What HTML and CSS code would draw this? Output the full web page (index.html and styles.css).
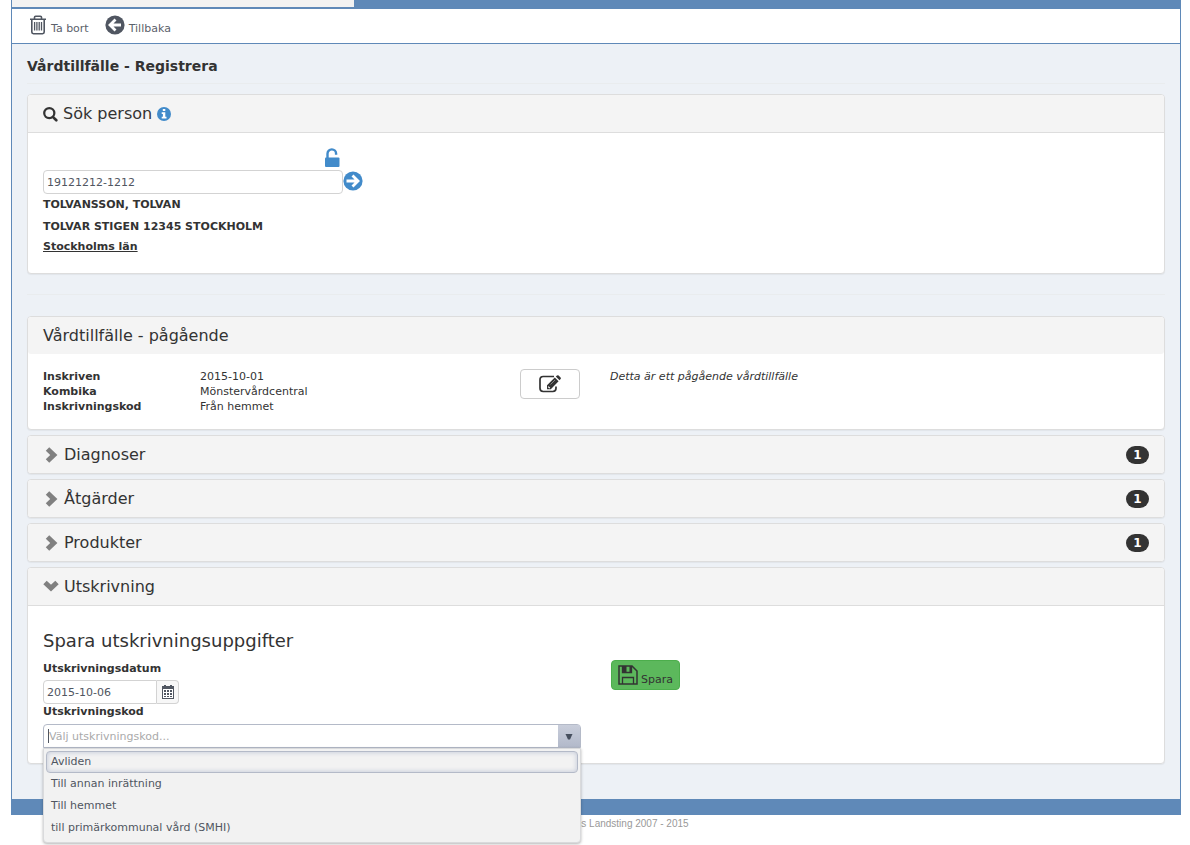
FILE: index.html
```html
<!DOCTYPE html>
<html lang="sv">
<head>
<meta charset="utf-8">
<meta name="viewport" content="width=device-width, initial-scale=1">
<title>Vårdtillfälle - Registrera</title>
<link rel="stylesheet" href="styles.css">
</head>
<body>
<div class="shell">
  <div class="tabstrip"><div class="tab-area"></div></div>
  <nav class="toolbar" aria-label="Verktyg">
    <button type="button" class="tool">
      <svg width="18" height="20" viewBox="0 0 18 20" fill="none" stroke="#505661"><path stroke-width="1.6" d="M1 4.2h16M5.5 4V2.3Q5.5 1.2 6.6 1.2h4.8q1.1 0 1.1 1.1V4M2.8 4.5v12.6q0 1.6 1.6 1.6h9.2q1.6 0 1.6-1.6V4.500"/><path stroke-width="1.3" d="M5.600 7v8.500M7.900 7v8.500M10.200 7v8.500M12.500 7v8.500"/></svg>
      <span>Ta bort</span>
    </button>
    <button type="button" class="tool">
      <svg width="20" height="20" viewBox="0 0 20 20"><circle cx="10" cy="10" r="9.600" fill="#505661"/><path d="M16 10H5.500M10.500 4.500L5 10l5.500 5.500" fill="none" stroke="#fff" stroke-width="2.800"/></svg>
      <span>Tillbaka</span>
    </button>
  </nav>
  <main class="content">
    <h1 class="page-title">Vårdtillfälle - Registrera</h1>

    <section class="panel search-panel">
      <h2 class="panel-head ruled">
        <svg width="15" height="16" viewBox="0 0 16 16" fill="none" stroke="#333"><circle cx="6.700" cy="7" r="5.400" stroke-width="2.400"/><path d="M10.500 11l3.700 3.700" stroke-width="2.800" stroke-linecap="round"/></svg>
        <span>Sök person</span>
        <svg width="14" height="14" viewBox="0 0 14 14"><circle cx="7" cy="7" r="7" fill="#428bca"/><path d="M5.800 2h2.500v2H5.800zM4.700 5.300h3.600v4.500h1.200v1.700H4.700V9.800h1.200V7H4.700z" fill="#fff"/></svg>
      </h2>
      <div class="search-body">
        <div class="lock-row">
          <svg width="16" height="20" viewBox="0 0 16 20"><path d="M3.500 10V5.700a4.300 4.300 0 0 1 8.600 0v1" fill="none" stroke="#428bca" stroke-width="2.400"/><rect x="1" y="9.500" width="14.500" height="9.500" rx="1" fill="#428bca"/></svg>
        </div>
        <div class="search-row">
          <input class="field person-field" type="text" value="19121212-1212" aria-label="Personnummer">
          <button type="button" class="go" aria-label="Sök">
            <svg width="20" height="20" viewBox="0 0 20 20"><circle cx="10" cy="10" r="9.600" fill="#428bca"/><path d="M3.500 10h10.500M9.500 4.500L15 10l-5.500 5.500" fill="none" stroke="#fff" stroke-width="2.800"/></svg>
          </button>
        </div>
        <p class="person-line">TOLVANSSON, TOLVAN</p>
        <p class="person-line">TOLVAR STIGEN 12345 STOCKHOLM</p>
        <p class="region-line">Stockholms län</p>
      </div>
    </section>

    <hr class="divider">

    <section class="panel">
      <h2 class="panel-head">Vårdtillfälle - pågående</h2>
      <div class="care-body">
        <dl class="facts">
          <dt>Inskriven</dt><dd>2015-10-01</dd>
          <dt>Kombika</dt><dd>Mönstervårdcentral</dd>
          <dt>Inskrivningskod</dt><dd>Från hemmet</dd>
        </dl>
        <div>
          <button type="button" class="edit" aria-label="Redigera">
            <svg width="22" height="18" viewBox="0 0 22 18"><path d="M15 1.500H4.200Q1 1.500 1 4.700v8.600q0 3.200 3.200 3.200h9.600q3.200 0 3.200-3.200V11.500" fill="none" stroke="#333" stroke-width="1.700"/><path d="M8 14.300V10.300L15.800 2.500l3.800 3.800-7.800 8zM16.800 1.600l1.200-1.100q.8-.6 1.600 0l2 2q.6.800 0 1.600l-1.100 1.200z" fill="#333"/><path d="M9.200 11.600l1.600 1.600" stroke="#fff" stroke-width="1.200"/><path d="M11.500 9.500L16 5" stroke="#aaa" stroke-width=".7"/></svg>
          </button>
        </div>
        <p class="status">Detta är ett pågående vårdtillfälle</p>
      </div>
    </section>

    <section class="panel">
      <button type="button" class="panel-head toggle"><svg width="16" height="16" viewBox="0 0 16 16"><path d="M4.500 2L10.800 8l-6.300 6" fill="none" stroke="#808080" stroke-width="5"/></svg><span>Diagnoser</span><span class="badge">1</span></button>
    </section>
    <section class="panel">
      <button type="button" class="panel-head toggle"><svg width="16" height="16" viewBox="0 0 16 16"><path d="M4.500 2L10.800 8l-6.300 6" fill="none" stroke="#808080" stroke-width="5"/></svg><span>Åtgärder</span><span class="badge">1</span></button>
    </section>
    <section class="panel">
      <button type="button" class="panel-head toggle"><svg width="16" height="16" viewBox="0 0 16 16"><path d="M4.500 2L10.800 8l-6.300 6" fill="none" stroke="#808080" stroke-width="5"/></svg><span>Produkter</span><span class="badge">1</span></button>
    </section>

    <section class="panel">
      <button type="button" class="panel-head toggle ruled" aria-expanded="true"><svg width="16" height="16" viewBox="0 0 16 16"><path d="M2 3.500L8 9l6-5.500" fill="none" stroke="#808080" stroke-width="5"/></svg><span>Utskrivning</span></button>
      <div class="discharge">
        <form class="discharge-form">
          <h3 class="form-title">Spara utskrivningsuppgifter</h3>
          <label class="label" for="date">Utskrivningsdatum</label>
          <div class="date-row">
            <input class="field date-field" id="date" type="text" value="2015-10-06">
            <button type="button" class="calendar" aria-label="Välj datum">
              <svg width="12" height="14" viewBox="0 0 12 14"><path d="M0 1h2V0h2v1h4V0h2v1h2v13H0z" fill="#505661"/><path d="M1 4h10v9H1z" fill="#fff"/><path d="M2 5h2v2H2zM5 5h2v2H5zM8 5h2v2H8zM2 8h2v2H2zM5 8h2v2H5zM8 8h2v2H8zM2 11h2v1H2zM5 11h2v1H5zM8 11h2v1H8z" fill="#505661"/></svg>
            </button>
          </div>
          <label class="label" for="code">Utskrivningskod</label>
          <div class="combo">
            <div class="combo-box">
              <span class="caret"></span>
              <input class="combo-field" id="code" type="text" role="combobox" aria-expanded="true" aria-controls="codes" placeholder="Välj utskrivningskod...">
              <button type="button" class="combo-button" aria-label="Visa alternativ"><svg width="8" height="7" viewBox="0 0 8 7"><path d="M0.500 1h7L5 6.500H3z" fill="#464f5e"/></svg></button>
            </div>
            <ul class="options" id="codes" role="listbox">
              <li class="option selected" role="option" aria-selected="true">Avliden</li>
              <li class="option" role="option">Till annan inrättning</li>
              <li class="option" role="option">Till hemmet</li>
              <li class="option" role="option">till primärkommunal vård (SMHI)</li>
            </ul>
          </div>
        </form>
        <div class="save-cell">
          <button type="button" class="save">
            <svg width="20" height="20" viewBox="0 0 20 20"><path d="M1 1h13l5 5v13H1z" fill="none" stroke="#333" stroke-width="1.500"/><path d="M4.500 1v6.500h9V1M4.500 19v-6.500h11V19" fill="none" stroke="#333" stroke-width="1.300"/><path d="M4.500 1h4v6h-4zM11.500 1h2v6h-2z" fill="#333"/></svg>
            <span>Spara</span>
          </button>
        </div>
      </div>
    </section>
  </main>
  <div class="bottom-bar"></div>
</div>
<footer class="footer">© Stockholms läns Landsting 2007 - 2015</footer>
</body>
</html>
```
FILE: styles.css
```css
* { box-sizing: border-box; }

body {
  min-height: 100vh;
  margin: 0;
  background: #fff;
  color: #333;
  font: 11px/15px Verdana, "DejaVu Sans", sans-serif;
}

button, input { font: inherit; color: inherit; }
button { margin: 0; padding: 0; border: 0; background: none; cursor: pointer; }
h1, h2, h3, p, dl, dd, ul { margin: 0; padding: 0; }
svg { display: block; flex: none; }

.shell {
  margin: 0 9px 0 11px;
  border: solid #5f89b8;
  border-width: 0 1px;
}

.tabstrip { height: 9px; background: #5f89b8; border-bottom: 2px solid #5f89b8; }
.tab-area { width: 342px; height: 7px; background: #f2f2f2; }

.toolbar {
  display: flex;
  gap: 16px;
  height: 35px;
  padding: 6px 17px;
  border-bottom: 1px solid #5f89b8;
  background: #fff;
}
.tool { display: flex; align-items: flex-start; gap: 4px; color: #5b616b; }
.tool span { padding-top: 6px; }

.content {
  padding: 14px 15px 35px;
  background: #edf1f6;
}

.page-title {
  margin-bottom: 10px;
  padding-bottom: 8px;
  border-bottom: 1px solid #e9ecee;
  font-size: 14px;
  line-height: 17px;
}

.panel {
  margin-bottom: 5px;
  border: 1px solid #ddd;
  border-radius: 4px;
  background: #fff;
  box-shadow: 0 1px 1px rgba(0, 0, 0, .05);
}
.panel:last-child { margin-bottom: 0; }

.panel-head {
  display: flex;
  align-items: center;
  gap: 5px;
  width: 100%;
  height: 37px;
  padding: 1px 15px 0;
  border-radius: 3px;
  background: #f4f4f4;
  font-size: 16px;
  font-weight: normal;
  line-height: 20px;
}
.ruled { height: 38px; border-bottom: 1px solid #ddd; border-radius: 3px 3px 0 0; }

.badge {
  min-width: 23px;
  margin-left: auto;
  border-radius: 10px;
  background: #333;
  color: #fff;
  font-size: 12px;
  font-weight: bold;
  line-height: 18px;
  text-align: center;
}

.search-body { padding: 15px 15px 17px; }
.lock-row { display: flex; justify-content: flex-end; width: 297px; }
.search-row { display: flex; align-items: flex-start; margin-top: 2px; }
.go { padding-top: 1px; }

.field {
  height: 24px;
  padding: 0 3px;
  border: 1px solid #d3d3d3;
  border-radius: 4px;
  background: #fff;
  color: #505661;
}
.person-field { width: 300px; }
.person-line { font-weight: bold; line-height: 22px; }
.region-line { font-weight: bold; line-height: 18px; text-decoration: underline; }

.divider { height: 1px; margin: 20px 0 21px; border: 0; background: #e9ecee; }

.care-body {
  display: grid;
  grid-template-columns: 477px 90px 1fr;
  min-height: 75px;
  padding: 15px;
}
.facts { display: grid; grid-template-columns: 157px 1fr; align-content: start; }
.facts dt { font-weight: bold; }
.edit {
  display: flex;
  align-items: center;
  justify-content: center;
  width: 60px;
  height: 30px;
  border: 1px solid #ccc;
  border-radius: 4px;
  background: #fff;
}
.status { font-style: italic; }

.discharge { display: grid; grid-template-columns: 568px 1fr; padding: 25px 15px 15px; }
.form-title { margin-bottom: 10px; font-size: 18px; font-weight: normal; line-height: 20px; }
.label { display: block; font-weight: bold; line-height: 16px; }
.date-row { display: flex; margin-top: 3px; }
.date-field { width: 114px; border-radius: 4px 0 0 4px; }
.calendar {
  display: flex;
  align-items: center;
  justify-content: center;
  width: 22px;
  border: 1px solid #d3d3d3;
  border-left: 0;
  border-radius: 0 4px 4px 0;
  background: #f7f7f7;
}

.combo { position: relative; width: 538px; margin-top: 4px; }
.combo-box {
  display: flex;
  align-items: center;
  height: 24px;
  padding-left: 4px;
  border: 1px solid #b4bac8;
  border-radius: 4px 4px 0 0;
  background: #fff;
}
.caret { width: 1px; height: 14px; background: #505661; }
.combo-field { flex: 1; min-width: 0; height: 22px; padding: 0; border: 0; outline: 0; background: none; }
.combo-field::placeholder { color: #aaa; opacity: 1; }
.combo-button {
  display: flex;
  align-items: center;
  justify-content: center;
  width: 22px;
  height: 22px;
  background: linear-gradient(#c9cedb, #b2b9ca);
}
.options {
  position: absolute;
  top: 24px;
  left: 0;
  width: 100%;
  padding: 2px 2px 3px;
  border: 1px solid #d9dadc;
  border-radius: 0 0 4px 4px;
  background: #f2f2f2;
  box-shadow: 0 1px 3px rgba(0, 0, 0, .3);
  color: #505661;
  list-style: none;
}
.option { padding: 0 4px; border: 1px solid transparent; border-radius: 4px; line-height: 20px; }
.selected { border-color: #b4bac8; box-shadow: inset 0 0 4px 1px #ccd1dd; }

.save-cell { padding-top: 29px; }
.save {
  display: flex;
  align-items: flex-start;
  gap: 3px;
  height: 30px;
  padding: 4px 6px;
  border: 1px solid #4cae4c;
  border-radius: 4px;
  background: #5cb85c;
}
.save span { padding-top: 7px; }

.bottom-bar { height: 16px; background: #5f89b8; }
.footer {
  margin: 0 9px 0 11px;
  color: #999;
  font: 10px/18px Arial, "Liberation Sans", sans-serif;
  text-align: center;
}
```
